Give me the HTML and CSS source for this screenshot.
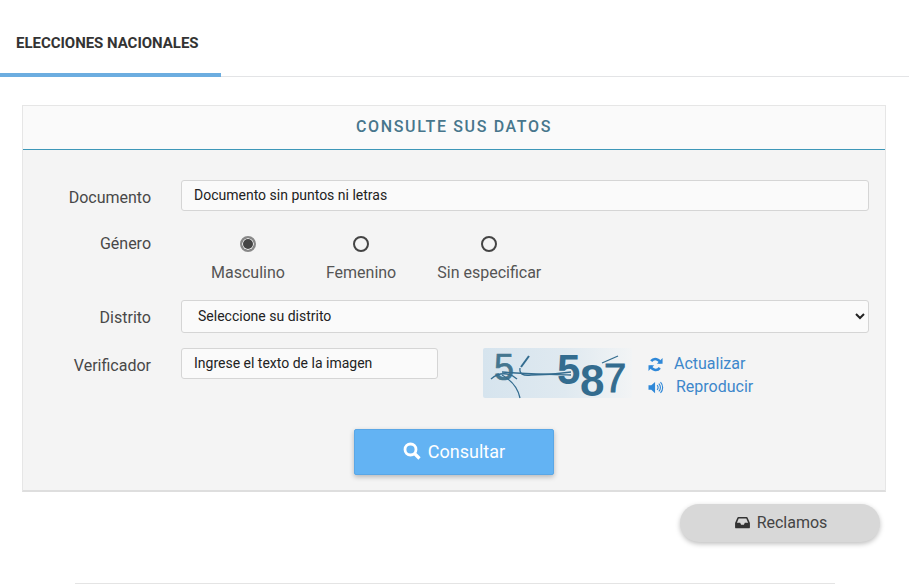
FILE: index.html
```html
<!DOCTYPE html>
<html lang="es">
<head>
<meta charset="utf-8">
<title>Elecciones Nacionales</title>
<link rel="stylesheet" href="styles.css">
</head>
<body>
<nav class="tabs"><a class="tab" href="#">ELECCIONES NACIONALES</a></nav>
<main class="content">
  <section class="card">
    <h1 class="card-title">CONSULTE SUS DATOS</h1>
    <div class="card-rule"></div>
    <form class="card-body">
      <div class="row row-doc">
        <label class="label">Documento</label>
        <input class="field field-full" type="text" placeholder="Documento sin puntos ni letras">
      </div>
      <div class="row row-gen">
        <span class="label">Género</span>
        <div class="radios">
          <label class="radio"><input type="radio" name="g" checked><span>Masculino</span></label>
          <label class="radio"><input type="radio" name="g"><span>Femenino</span></label>
          <label class="radio"><input type="radio" name="g"><span>Sin especificar</span></label>
        </div>
      </div>
      <div class="row row-dis">
        <label class="label">Distrito</label>
        <select class="field field-full select"><option>Seleccione su distrito</option></select>
      </div>
      <div class="row row-ver">
        <label class="label">Verificador</label>
        <input class="field field-code" type="text" placeholder="Ingrese el texto de la imagen">
        <svg class="captcha" viewBox="0 -10 149 74" width="149" height="74" role="img" aria-label="captcha">
          <defs>
            <linearGradient id="cap" x1="0" x2="1" y1="0" y2="0">
              <stop offset="0" stop-color="#d6e4ee"/>
              <stop offset=".55" stop-color="#dfe9f0"/>
              <stop offset="1" stop-color="#f2f4f5"/>
            </linearGradient>
          </defs>
          <rect width="149" height="50" rx="2" fill="url(#cap)"/>
          <text x="11" y="32" class="d d1">5</text>
          <text x="74" y="36" class="d d2">5</text>
          <text x="97" y="48" class="d d3">8</text>
          <text x="121" y="44" class="d d4">7</text>
          <g class="noise">
            <path d="M19 24 C40 26 60 26 88 27"/>
            <path d="M37 20 C36 26 40 28 48 27 C60 27 75 26 88 24"/>
            <path d="M38 19 L46 8" class="thick"/>
            <path d="M8 31 C16 24 26 24 34 31"/>
            <path d="M19 27 C28 32 35 40 37 50"/>
            <path d="M119 15 L135 8"/>
          </g>
        </svg>
        <div class="links">
          <a class="link" href="#">
            <svg class="ico" viewBox="0 0 16 16" width="15" height="15"><path d="M13.300 6.600A5.600 5.600 0 0 0 3.400 4.400" class="st"/><path d="M15.500 1v6.100H9.400z" class="fl"/><path d="M2.700 9.400a5.600 5.600 0 0 0 9.900 2.200" class="st"/><path d="M.5 15V8.900h6.100z" class="fl"/></svg>
            <span>Actualizar</span>
          </a>
          <a class="link link-b" href="#">
            <svg class="ico" viewBox="0 0 16 16" width="16" height="15"><path d="M0 5.500h3L7 2v12l-4-3.500H0z" class="fl"/><path d="M9.200 5.500a3.500 3.500 0 0 1 0 5M11 3.800a6 6 0 0 1 0 8.400M12.800 2.200a8.500 8.500 0 0 1 0 11.600" class="sv"/></svg>
            <span>Reproducir</span>
          </a>
        </div>
      </div>
      <div class="actions">
        <button class="btn" type="button">
          <svg viewBox="0 0 18 18" width="18" height="18"><circle cx="7.500" cy="7.500" r="5.500" class="mag"/><path d="M11.500 11.500 16.500 16.500" class="mag mag-h"/></svg>
          <span>Consultar</span>
        </button>
      </div>
    </form>
  </section>
  <div class="below">
    <a class="pill" href="#">
      <svg viewBox="0 0 16 14" width="15" height="13"><path fill-rule="evenodd" d="M3.500 1h9c.4 0 .7.200.9.600L16 7.500V12c0 .8-.6 1.300-1.300 1.300H1.300C.6 13.300 0 12.800 0 12V7.500L2.600 1.600c.2-.4.500-.6.900-.6zM3.900 2.800 2 7.300h3.500l1 2h3l1-2H14l-1.900-4.500z"/></svg>
      <span>Reclamos</span>
    </a>
  </div>
  <hr class="rule">
</main>
</body>
</html>
```
FILE: styles.css
```css
* { box-sizing: border-box; }
html, body { margin: 0; height: 100%; }
body {
  background: #fff;
  color: #444;
  font-family: Roboto, "Liberation Sans", sans-serif;
  overflow: hidden;
}
.tabs {
  height: 77px;
  border-bottom: 1px solid #e3e4e6;
  display: flex;
}
.tab {
  width: 221px;
  height: 77px;
  padding: 35px 0 0 16px;
  border-bottom: 4px solid #6cade0;
  color: #333;
  font-size: 15px;
  line-height: 16px;
  font-weight: 700;
  letter-spacing: -.03px;
  text-decoration: none;
  white-space: nowrap;
}
.content { padding: 28px 23px 0 22px; }
.card {
  border: 1px solid #e6e6e6;
  border-bottom: 2px solid #dedede;
  background: #f4f4f4;
  height: 387px;
}
.card-title {
  margin: 0;
  height: 43px;
  background: #fafafa;
  color: #47768c;
  font-size: 16px;
  font-weight: 500;
  letter-spacing: 1.650px;
  line-height: 42px;
  text-align: center;
}
.card-rule { height: 1px; background: #3d97b8; }
.card-body { padding: 30px 16px 0 0; }
.row { display: flex; align-items: flex-start; }
.label {
  width: 128px;
  margin-right: 30px;
  flex: none;
  text-align: right;
  font-size: 16px;
  line-height: 20px;
  color: #484848;
}
.row-doc .label { padding-top: 8px; }
.row-gen { margin-top: 23px; }
.row-gen .label { padding-top: 0; }
.row-dis { margin-top: 17px; }
.row-dis .label { padding-top: 8px; }
.row-ver { margin-top: 15px; height: 50px; }
.row-ver .label { padding-top: 8px; }
.field {
  height: 31px;
  border: 1px solid #d5d5d5;
  border-radius: 3px;
  background: #fafafa;
  color: #222;
  font-family: inherit;
  font-size: 14px;
  padding: 0 12px 2px;
  outline: none;
}
.field::placeholder { color: #222; opacity: 1; }
.field-full { flex: 1; min-width: 0; }
.select { height: 33px; padding: 0 12px 1px; }
.field-code { width: 257px; flex: none; }
.radios { display: flex; gap: 41px; margin-left: 30px; margin-top: 2px; }
.radio {
  display: flex;
  flex-direction: column;
  align-items: center;
  font-size: 16px;
  line-height: 20px;
  color: #555;
}
.radio input {
  appearance: none;
  width: 16px;
  height: 16px;
  margin: 0 0 11px;
  border: 2px solid #444;
  border-radius: 50%;
  background: transparent;
}
.radio input:checked {
  border-color: #888;
  background: #444;
  box-shadow: inset 0 0 0 1px #f4f4f4;
}
.captcha { margin: -10px 0 0 45px; flex: none; display: block; }
.d { font-family: "Liberation Sans", sans-serif; fill: #336c8f; font-weight: 700; }
.d1 { font-size: 36px; font-weight: 400; fill: #44768f; stroke: #44768f; stroke-width: .6; }
.d2 { font-size: 42px; }
.d3 { font-size: 44px; }
.d4 { font-size: 40px; font-weight: 400; stroke: #336c8f; stroke-width: 1; }
.noise path { fill: none; stroke: #336c8f; stroke-width: 1.300; }
.noise .thick { stroke-width: 2; }
.links { margin-left: 16px; padding-top: 6px; display: flex; flex-direction: column; gap: 3px; }
.link {
  display: flex;
  align-items: center;
  color: #3d87cb;
  font-size: 16px;
  line-height: 20px;
  text-decoration: none;
}
.link .ico { margin-right: 11px; flex: none; }
.link-b .ico { margin-right: 12px; }
.st { fill: none; stroke: #2f88d8; stroke-width: 2.800; }
.sv { fill: none; stroke: #2f88d8; stroke-width: 1.200; }
.fl { fill: #2f88d8; }
.actions { display: flex; justify-content: center; margin-top: 31px; padding-left: 16px; }
.btn {
  width: 200px;
  height: 46px;
  border: 1px solid #5aa7e6;
  border-radius: 2px;
  background: #63b3f3;
  color: #fff;
  font-family: inherit;
  font-size: 18px;
  padding: 0 0 2px;
  display: flex;
  align-items: center;
  justify-content: center;
  gap: 7px;
  box-shadow: 0 2px 5px rgba(0, 0, 0, .25);
}
.mag { fill: none; stroke: #fff; stroke-width: 2.800; }
.mag-h { stroke-width: 3.200; }
.below { display: flex; justify-content: flex-end; padding: 12px 6px 0 0; }
.pill {
  width: 200px;
  height: 38px;
  border-radius: 19px;
  background: #d8d8d8;
  color: #444;
  font-size: 16px;
  padding: 0 0 1px 2px;
  display: flex;
  align-items: center;
  justify-content: center;
  gap: 7px;
  text-decoration: none;
  box-shadow: 0 2px 5px rgba(0, 0, 0, .25);
}
.pill svg { fill: #333; }
.rule {
  margin: 41px 51px 0 53px;
  border: 0;
  border-top: 1px solid #e4e4e4;
}
```
